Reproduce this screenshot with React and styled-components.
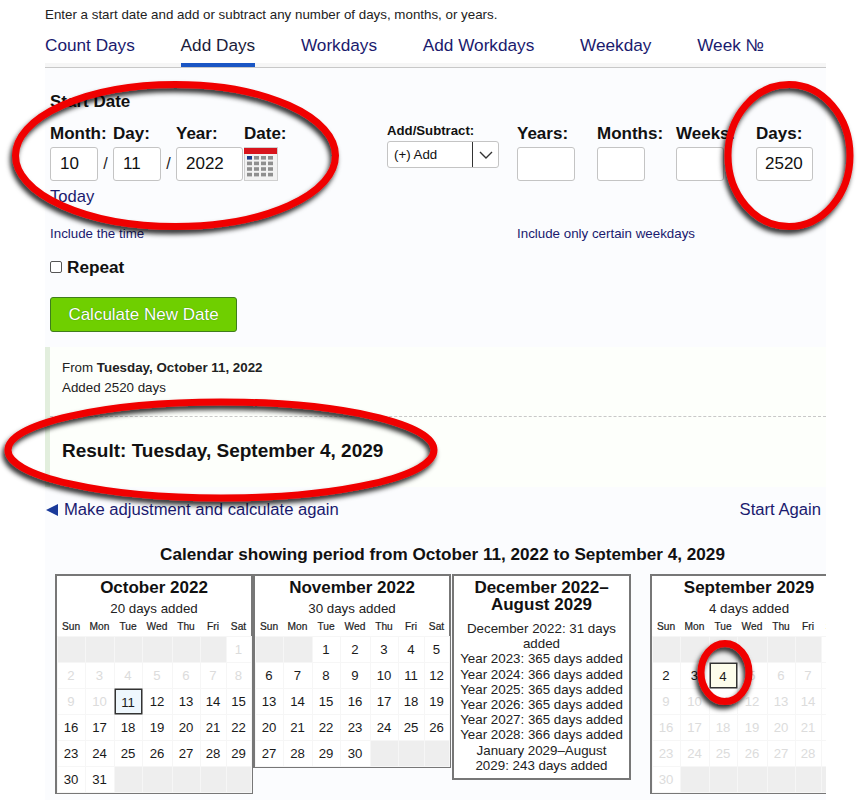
import React from 'react';
import styled, { createGlobalStyle } from 'styled-components';

const GlobalStyle = createGlobalStyle`
  html, body { margin: 0; padding: 0; background: #fff; overflow: hidden; }
  body { font-family: "Liberation Sans", Arial, sans-serif; color: #111; }
`;

const Page = styled.div`
  position: relative;
  width: 859px;
  height: 800px;
  padding: 8px 33px 0 45px;
  box-sizing: border-box;
  overflow: hidden;
`;

const Intro = styled.div`
  font-size: 13.35px;
  line-height: 14px;
  color: #222;
`;

const Tabs = styled.nav`
  display: flex;
  gap: 45.8px;
  margin-top: 6px;
  height: 40px;
  box-sizing: border-box;
  background: linear-gradient(#fff 35px, #f6f6f6 35px);
  border-bottom: 1px solid #c8c8c8;
`;

const Tab = styled.a`
  font-size: 17.2px;
  line-height: 34px;
  height: 39px;
  box-sizing: border-box;
  color: ${p => (p.$active ? '#1b1b3a' : '#1a1a6e')};
  border-bottom: ${p => (p.$active ? '4px solid #1a56c4' : 'none')};
`;

const Panel = styled.main`
  background: #fbfcfe;
  height: 760px;
  overflow: hidden;
`;

const Form = styled.section`
  padding: 25px 5px 0;
  height: 279px;
  box-sizing: border-box;
`;

const Heading = styled.h2`
  margin: 0;
  font-size: 17px;
  line-height: 18px;
  font-weight: 700;
`;

const FieldRows = styled.div`
  display: flex;
  margin-top: 13px;
`;

const DateGroup = styled.div`
  width: 337px;
`;

const Fields = styled.div`
  display: flex;
`;

const Field = styled.div`
  display: flex;
  flex-direction: column;
  width: ${p => p.$w}px;
`;

const Label = styled.label`
  font-size: 17px;
  font-weight: 700;
  line-height: 20px;
  height: 23px;
  color: #111;
  white-space: nowrap;
`;

const SmallLabel = styled.label`
  font-size: 13.2px;
  font-weight: 700;
  line-height: 14px;
  height: 14px;
  margin: 0 0 3px;
  color: #111;
  white-space: nowrap;
`;

const NumberBox = styled.div`
  width: ${p => p.$w}px;
  height: 34px;
  box-sizing: border-box;
  background: #fff;
  border: 1px solid #c4c4c4;
  border-radius: 3px;
  font-size: 17px;
  line-height: 32px;
  padding-left: ${p => p.$pad || 9}px;
  color: #111;
`;

const InputRow = styled.div`
  display: flex;
  align-items: center;
`;

const Slash = styled.span`
  width: 15px;
  text-align: center;
  font-size: 16px;
  color: #222;
`;

const TodayLink = styled.a`
  display: block;
  font-size: 16.6px;
  line-height: 18px;
  margin-top: 7px;
  color: #1a1a6e;
`;

const SelectBox = styled.div`
  display: flex;
  width: 112px;
  height: 27px;
  box-sizing: border-box;
  background: #fff;
  border: 1px solid #c4c4c4;
  border-radius: 3px;
  font-size: 13.3px;
  line-height: 25px;
`;

const SelectValue = styled.span`
  flex: 1;
  padding-left: 6px;
  border-right: 1px solid #333;
`;

const SelectArrow = styled.span`
  width: 25px;
  display: flex;
  align-items: center;
  justify-content: center;
`;

const OptionLinks = styled.div`
  display: flex;
  margin-top: 21px;
  font-size: 13.35px;
  line-height: 14px;
  color: #1a1a6e;
`;

const TimeLink = styled.a`
  width: 467px;
`;

const RepeatRow = styled.label`
  display: flex;
  align-items: center;
  gap: 5px;
  margin-top: 17px;
  font-size: 17.2px;
  font-weight: 700;
  line-height: 18px;
`;

const CheckBox = styled.span`
  width: 12px;
  height: 12px;
  box-sizing: border-box;
  border: 1px solid #555;
  border-radius: 2px;
  background: #fff;
`;

const CalcButton = styled.button`
  display: block;
  width: 187px;
  height: 35px;
  margin-top: 21px;
  padding: 1px 0 0;
  border: 1px solid #3f7d1c;
  border-radius: 3px;
  background: #6fcf00;
  color: #fff;
  font: 17px "Liberation Sans", Arial, sans-serif;
  text-shadow: 0 0 1px #2f6d00;
`;

const ResultBox = styled.section`
  height: 140px;
  box-sizing: border-box;
  background: #fdfffb;
  border-left: 5px solid #e2eedd;
`;

const ResultTop = styled.div`
  height: 70px;
  box-sizing: border-box;
  padding: 11px 12px 0;
  font-size: 13.35px;
  line-height: 20px;
  color: #222;
  border-bottom: 1px dashed #c8c8c8;
`;

const ResultLine = styled.div`
  font-size: 19px;
  font-weight: 700;
  line-height: 22px;
  padding: 23px 12px 0;
  color: #111;
`;

const LinkRow = styled.div`
  display: flex;
  justify-content: space-between;
  padding: 14px 5px 0 1px;
  font-size: 16.65px;
  line-height: 18px;
  color: #1a1a6e;
`;

const BackLink = styled.a`
  display: flex;
  align-items: center;
  gap: 6px;
`;

const CalTitle = styled.h3`
  margin: 26px 0 0 14px;
  text-align: center;
  font-size: 17.15px;
  line-height: 18px;
  font-weight: 700;
`;

const CalRow = styled.div`
  display: flex;
  align-items: flex-start;
  margin: 11px 0 0 10px;
  width: 900px;
`;

const MonthBox = styled.div`
  flex: none;
  width: ${p => p.$w || 198}px;
  margin-right: ${p => p.$gap || 0}px;
  box-sizing: border-box;
  background: #fff;
  border: 2px solid #777;
  padding: 3px 0 0;
  text-align: center;
`;

const MonthTitle = styled.div`
  font-size: 17px;
  font-weight: 700;
  line-height: 17px;
  color: #111;
`;

const MonthNote = styled.div`
  font-size: 13.35px;
  line-height: 15px;
  margin-top: 5px;
  color: #222;
`;

const Grid = styled.div`
  display: grid;
  grid-template-columns: 27px 28px 27px 29px 27px 25px 24px;
  gap: 1px;
  justify-content: center;
`;

const DayName = styled.div`
  font-size: 10.2px;
  line-height: 22px;
  height: 20px;
  color: #222;
  -webkit-text-stroke: 0.2px #222;
`;

const Cell = styled.div`
  height: 25px;
  line-height: ${p => (p.$kind === 'start' || p.$kind === 'end' ? 27 : 25)}px;
  font-size: 13.2px;
  box-sizing: border-box;
  background: ${p => (p.$kind === 'blank' ? '#eeeeee' : p.$kind === 'start' ? '#eef7fd' : p.$kind === 'end' ? '#fdfdec' : '#fff')};
  color: ${p => (p.$kind === 'off' ? '#dcdcdc' : '#1a1a1a')};
  box-shadow: ${p => (p.$kind === 'start' || p.$kind === 'end' ? 'inset 0 0 0 1px #333, 0 0 0 0.5px #333' : '0 0 0 1px #f6f6f6')};
  position: ${p => (p.$kind === 'start' || p.$kind === 'end' ? 'relative' : 'static')};
`;

const SpanList = styled.div`
  font-size: 13.35px;
  line-height: 15.2px;
  margin-top: 8px;
  padding: 0 5px 5px;
  color: #222;
`;

const Overlay = styled.svg`
  position: absolute;
  left: 0;
  top: 0;
  pointer-events: none;
`;

const DAYS = ['Sun', 'Mon', 'Tue', 'Wed', 'Thu', 'Fri', 'Sat'];

const buildCells = (lead, total, trail, kindOf) => {
  const cells = [];
  for (let i = 0; i < lead; i++) cells.push({ kind: 'blank' });
  for (let d = 1; d <= total; d++) cells.push({ label: d, kind: kindOf(d) });
  for (let i = 0; i < trail; i++) cells.push({ kind: 'blank' });
  return cells;
};

const months = {
  oct: { title: 'October 2022', note: '20 days added', cells: buildCells(6, 31, 5, d => (d < 11 ? 'off' : d === 11 ? 'start' : 'on')) },
  nov: { title: 'November 2022', note: '30 days added', cells: buildCells(2, 30, 3, () => 'on') },
  sep: { title: 'September 2029', note: '4 days added', cells: buildCells(6, 30, 6, d => (d === 4 ? 'end' : d === 2 || d === 3 ? 'on' : 'off')) },
};

const spanLines = [
  'December 2022: 31 days added',
  'Year 2023: 365 days added',
  'Year 2024: 366 days added',
  'Year 2025: 365 days added',
  'Year 2026: 365 days added',
  'Year 2027: 365 days added',
  'Year 2028: 366 days added',
  'January 2029–August 2029: 243 days added',
];

const Month = ({ data, gap }) => (
  <MonthBox $gap={gap}>
    <MonthTitle>{data.title}</MonthTitle>
    <MonthNote>{data.note}</MonthNote>
    <Grid>
      {DAYS.map(d => <DayName key={d}>{d}</DayName>)}
      {data.cells.map((c, i) => <Cell key={i} $kind={c.kind}>{c.label}</Cell>)}
    </Grid>
  </MonthBox>
);

const CalendarIcon = () => {
  const squares = [];
  for (let r = 0; r < 4; r++) {
    for (let c = 0; c < 4; c++) {
      squares.push(
        <rect key={`${r}-${c}`} x={3 + c * 7} y={9 + r * 5.6} width="5" height="3.6" fill={r === 0 && c === 0 ? '#1a3a8a' : '#8f8f8f'} />
      );
    }
  }
  return (
    <svg width="34" height="34" viewBox="0 0 34 34">
      <rect x="0.5" y="0.5" width="33" height="33" fill="#f2f2f2" stroke="#cfcfcf" />
      <rect x="0" y="1" width="33" height="6" fill="#d8141c" />
      {squares}
    </svg>
  );
};

const Rings = () => (
  <Overlay width="859" height="800" viewBox="0 0 859 800">
    <defs>
      <filter id="ring-shadow" x="-20%" y="-20%" width="140%" height="140%">
        <feDropShadow dx="-2" dy="4" stdDeviation="2.5" floodColor="#000" floodOpacity="0.85" />
      </filter>
    </defs>
    <g fill="none" stroke="#f00000" strokeWidth="7" filter="url(#ring-shadow)">
      <ellipse cx="175.5" cy="155.5" rx="160" ry="71" />
      <ellipse cx="789" cy="155.5" rx="61" ry="71" />
      <ellipse cx="221" cy="450" rx="213" ry="48" />
      <ellipse cx="725" cy="672.5" rx="24" ry="29" />
    </g>
  </Overlay>
);

export default function App() {
  return (
    <>
      <GlobalStyle />
      <Page>
        <Intro>Enter a start date and add or subtract any number of days, months, or years.</Intro>
        <Tabs>
          <Tab>Count Days</Tab>
          <Tab $active>Add Days</Tab>
          <Tab>Workdays</Tab>
          <Tab>Add Workdays</Tab>
          <Tab>Weekday</Tab>
          <Tab>Week №</Tab>
        </Tabs>
        <Panel>
          <Form>
            <Heading>Start Date</Heading>
            <FieldRows>
              <DateGroup>
                <Fields>
                  <Field $w={63}><Label>Month:</Label><InputRow><NumberBox $w={48}>10</NumberBox><Slash>/</Slash></InputRow></Field>
                  <Field $w={63}><Label>Day:</Label><InputRow><NumberBox $w={48}>11</NumberBox><Slash>/</Slash></InputRow></Field>
                  <Field $w={68}><Label>Year:</Label><NumberBox $w={67}>2022</NumberBox></Field>
                  <Field $w={34}><Label>Date:</Label><CalendarIcon /></Field>
                </Fields>
                <TodayLink>Today</TodayLink>
              </DateGroup>
              <Field $w={130}>
                <SmallLabel>Add/Subtract:</SmallLabel>
                <SelectBox>
                  <SelectValue>(+) Add</SelectValue>
                  <SelectArrow>
                    <svg width="14" height="8" viewBox="0 0 14 8"><path d="M1 1l6 6 6-6" fill="none" stroke="#333" strokeWidth="1.4" /></svg>
                  </SelectArrow>
                </SelectBox>
              </Field>
              <Field $w={80}><Label>Years:</Label><NumberBox $w={58} /></Field>
              <Field $w={79}><Label>Months:</Label><NumberBox $w={48} /></Field>
              <Field $w={80}><Label>Weeks:</Label><NumberBox $w={48} /></Field>
              <Field $w={57}><Label>Days:</Label><NumberBox $w={57} $pad={8}>2520</NumberBox></Field>
            </FieldRows>
            <OptionLinks>
              <TimeLink>Include the time</TimeLink>
              <a>Include only certain weekdays</a>
            </OptionLinks>
            <RepeatRow><CheckBox />Repeat</RepeatRow>
            <CalcButton>Calculate New Date</CalcButton>
          </Form>
          <ResultBox>
            <ResultTop>
              <div>From <b>Tuesday, October 11, 2022</b></div>
              <div>Added 2520 days</div>
            </ResultTop>
            <ResultLine>Result: Tuesday, September 4, 2029</ResultLine>
          </ResultBox>
          <LinkRow>
            <BackLink>
              <svg width="12" height="12" viewBox="0 0 12 12"><path d="M0 6L12 0v12z" fill="#1a3a9a" /></svg>
              Make adjustment and calculate again
            </BackLink>
            <a>Start Again</a>
          </LinkRow>
          <CalTitle>Calendar showing period from October 11, 2022 to September 4, 2029</CalTitle>
          <CalRow>
            <Month data={months.oct} />
            <Month data={months.nov} gap={1} />
            <MonthBox $w={179} $gap={19}>
              <MonthTitle>December 2022–<br />August 2029</MonthTitle>
              <SpanList>{spanLines.map(l => <div key={l}>{l}</div>)}</SpanList>
            </MonthBox>
            <Month data={months.sep} />
          </CalRow>
        </Panel>
        <Rings />
      </Page>
    </>
  );
}
